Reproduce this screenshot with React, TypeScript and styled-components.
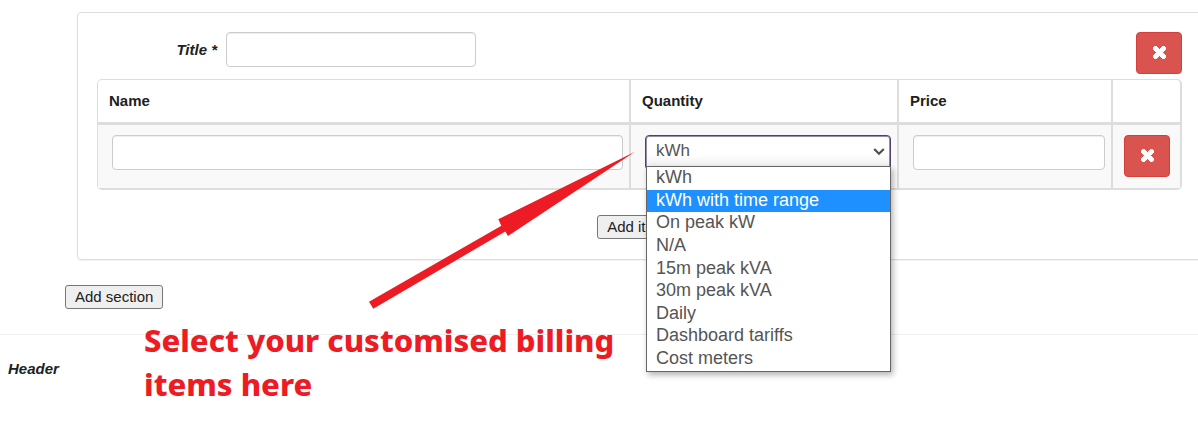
import React, { useState } from "react";
import styled, { createGlobalStyle } from "styled-components";

const GlobalStyle = createGlobalStyle`
  *, *::before, *::after { box-sizing: border-box; }
  body {
    margin: 0;
    overflow-x: hidden;
    background: #fff;
    color: #212121;
    font: 15px/20px "Liberation Sans", Arial, sans-serif;
  }
`;

const Page = styled.main`
  position: relative;
  overflow: hidden;
  padding: 12px 0 60px;
`;

const Panel = styled.section`
  margin: 0 -4px 25px 77px;
  padding: 19px;
  border: 1px solid #ddd;
  border-radius: 4px;
  box-shadow: 0 1px 1px rgba(0, 0, 0, 0.05);
`;

const TitleRow = styled.div`
  display: flex;
  align-items: flex-start;
  margin-bottom: 5px;
`;

const TitleLabel = styled.label`
  width: 120px;
  padding-top: 8px;
  text-align: right;
  font-weight: bold;
  font-style: italic;
`;

const TextInput = styled.input<{ $width?: string }>`
  display: block;
  width: ${(p) => p.$width ?? "100%"};
  height: 35px;
  padding: 6px 10px;
  border: 1px solid #ccc;
  border-radius: 4px;
  background: #fff;
  box-shadow: inset 0 1px 1px rgba(0, 0, 0, 0.075);
  color: #555;
  font: inherit;
`;

const TitleField = styled.div`
  flex: 1;
  margin-left: 9px;
`;

const DangerButton = styled.button`
  display: flex;
  align-items: center;
  justify-content: center;
  width: 46px;
  height: 42px;
  padding: 0 0 2px;
  border: 1px solid #d43f3a;
  border-radius: 4px;
  background: #d9534f;
  color: #fff;
  cursor: pointer;
`;

const ItemTable = styled.table`
  width: 100%;
  table-layout: fixed;
  border: solid #ddd;
  border-width: 1px 2px 2px 1px;
  border-radius: 5px;
  border-collapse: separate;
  border-spacing: 0;
`;

const Col = styled.col<{ $width?: string }>`
  width: ${(p) => p.$width ?? "auto"};
`;

const HeadCell = styled.th`
  height: 45px;
  padding: 0 11px;
  border-right: 2px solid #ddd;
  border-bottom: 3px solid #ddd;
  text-align: left;
  &:last-child { border-right: 0; }
`;

const Cell = styled.td<{ $action?: boolean }>`
  height: 63px;
  padding: ${(p) => (p.$action ? "10px 11px" : "10px 6px 10px 14px")};
  border-right: 2px solid #ddd;
  background: #f9f9f9;
  vertical-align: top;
  &:last-child { border-right: 0; }
`;

const SelectBox = styled.div`
  position: relative;
  color: #555;
`;

const Select = styled.select`
  display: block;
  width: 100%;
  height: 35px;
  padding: 0 10px 3px;
  appearance: none;
  border: 1px solid #53406b;
  border-radius: 4px;
  outline: none;
  background: linear-gradient(#fff 55%, #ececec);
  box-shadow: inset 0 0 0 1px rgba(83, 64, 107, 0.6);
  color: #555;
  font: 17px/20px "Liberation Sans", Arial, sans-serif;
`;

const Chevron = styled.svg`
  position: absolute;
  top: 12px;
  right: 6px;
  pointer-events: none;
`;

const Menu = styled.ul`
  position: absolute;
  z-index: 2;
  top: 31px;
  left: 1px;
  right: 0;
  display: flex;
  flex-direction: column;
  height: 206px;
  margin: 0;
  padding: 0 0 1px;
  border: 1px solid #666;
  background: #fff;
  box-shadow: 2px 3px 6px rgba(0, 0, 0, 0.3);
  list-style: none;
  font-size: 18px;
`;

const MenuItem = styled.li<{ $active: boolean }>`
  display: flex;
  flex: 1;
  align-items: center;
  padding: 0 9px 2px;
  background: ${(p) => (p.$active ? "#1e90ff" : "transparent")};
  color: ${(p) => (p.$active ? "#fff" : "#555")};
  cursor: default;
`;

const AddRow = styled.div`
  display: flex;
  justify-content: center;
  padding: 25px 0 1px 2px;
`;

const PlainButton = styled.button`
  height: 24px;
  padding: 0 9px;
  border: 1px solid #767676;
  border-radius: 3px;
  background: #efefef;
  color: #212121;
  font: inherit;
  cursor: pointer;
`;

const SectionActions = styled.div`
  display: flex;
  padding: 0 65px 25px;
  border-bottom: 1px solid #eee;
`;

const HeaderLabel = styled.div`
  padding: 24px 8px;
  font-weight: bold;
  font-style: italic;
`;

const Arrow = styled.svg`
  position: absolute;
  z-index: 1;
  top: 150px;
  left: 367px;
  pointer-events: none;
`;

const Callout = styled.p`
  position: absolute;
  top: 318px;
  left: 144px;
  width: 490px;
  margin: 0;
  color: #ed1c24;
  font: 800 31px/44px "Noto Sans", "Open Sans", sans-serif;
`;

const options = [
  "kWh",
  "kWh with time range",
  "On peak kW",
  "N/A",
  "15m peak kVA",
  "30m peak kVA",
  "Daily",
  "Dashboard tariffs",
  "Cost meters",
];

function RemoveButton({ label }: { label: string }) {
  return (
    <DangerButton type="button" aria-label={label}>
      <svg width="13" height="13" viewBox="302 366 1188 1188" fill="currentColor" aria-hidden="true">
        <path d="M1490 1322q0 40-28 68l-136 136q-28 28-68 28t-68-28l-294-294-294 294q-28 28-68 28t-68-28l-136-136q-28-28-28-68t28-68l294-294-294-294q-28-28-28-68t28-68l136-136q28-28 68-28t68 28l294 294 294-294q28-28 68-28t68 28l136 136q28 28 28 68t-28 68l-294 294 294 294q28 28 28 68z" stroke="currentColor" strokeWidth="90" />
      </svg>
    </DangerButton>
  );
}

function QuantityPicker() {
  const [value, setValue] = useState(options[0]);
  const [active, setActive] = useState(1);
  return (
    <SelectBox>
      <Select aria-label="Quantity" value={value} onChange={(e) => setValue(e.target.value)}>
        {options.map((o) => (
          <option key={o}>{o}</option>
        ))}
      </Select>
      <Chevron width="12" height="9" viewBox="0 0 12 9" fill="none" stroke="#505050" strokeWidth="2.2" aria-hidden="true">
        <path d="M1.2 2l4.8 4.8L10.8 2" />
      </Chevron>
      <Menu role="listbox" aria-label="Quantity options">
        {options.map((o, i) => (
          <MenuItem
            key={o}
            role="option"
            aria-selected={o === value}
            $active={i === active}
            onMouseEnter={() => setActive(i)}
            onClick={() => setValue(o)}
          >
            {o}
          </MenuItem>
        ))}
      </Menu>
    </SelectBox>
  );
}

export default function App() {
  return (
    <>
      <GlobalStyle />
      <Page>
        <Panel>
          <TitleRow>
            <TitleLabel htmlFor="title">Title *</TitleLabel>
            <TitleField>
              <TextInput id="title" $width="250px" />
            </TitleField>
            <RemoveButton label="Remove section" />
          </TitleRow>
          <ItemTable>
            <colgroup>
              <Col />
              <Col $width="268px" />
              <Col $width="214px" />
              <Col $width="67px" />
            </colgroup>
            <thead>
              <tr>
                <HeadCell scope="col">Name</HeadCell>
                <HeadCell scope="col">Quantity</HeadCell>
                <HeadCell scope="col">Price</HeadCell>
                <HeadCell as="td" />
              </tr>
            </thead>
            <tbody>
              <tr>
                <Cell><TextInput aria-label="Name" /></Cell>
                <Cell><QuantityPicker /></Cell>
                <Cell><TextInput aria-label="Price" /></Cell>
                <Cell $action><RemoveButton label="Remove item" /></Cell>
              </tr>
            </tbody>
          </ItemTable>
          <AddRow>
            <PlainButton type="button">Add items</PlainButton>
          </AddRow>
        </Panel>
        <SectionActions>
          <PlainButton type="button">Add section</PlainButton>
        </SectionActions>
        <HeaderLabel>Header</HeaderLabel>
        <Arrow width="270" height="162" viewBox="367 150 270 162" fill="#ed1c24" aria-hidden="true">
          <path d="M369 301.7L501.4 225.7L498.3 219.3L635 151.8L508 236L505.3 231.5L373.3 308.7Z" />
        </Arrow>
        <Callout>Select your customised billing items here</Callout>
      </Page>
    </>
  );
}
